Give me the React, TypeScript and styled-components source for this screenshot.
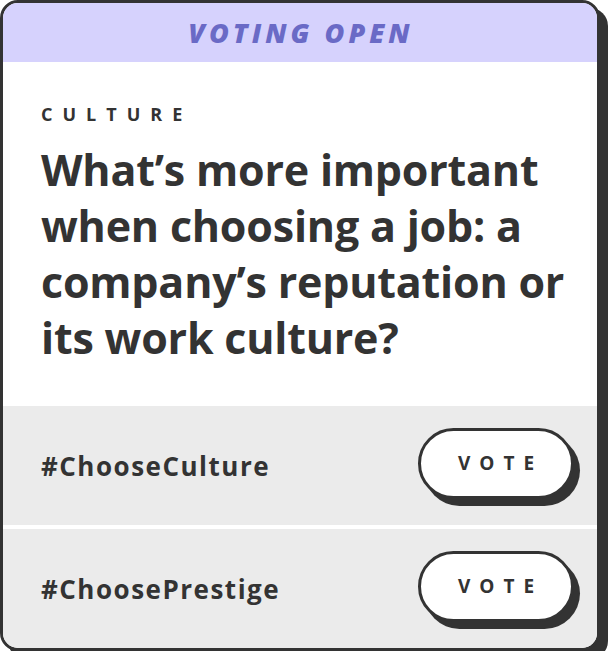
import React from 'react';
import styled, { createGlobalStyle } from 'styled-components';

const GlobalStyle = createGlobalStyle`
  html, body {
    margin: 0;
    padding: 0;
    background: #ffffff;
  }
  body {
    font-family: "Open Sans", Lato, sans-serif;
    color: #333333;
  }
`;

const options: string[] = ['#ChooseCulture', '#ChoosePrestige'];

export default function App() {
  return (
    <>
      <GlobalStyle />
      <Card>
        <Banner>VOTING OPEN</Banner>
        <Body>
          <Category>CULTURE</Category>
          <Question>
            What’s more important when choosing a job: a company’s reputation or its work culture?
          </Question>
        </Body>
        <Options>
          {options.map(x => (
            <OptionRow key={x}>
              <Tag>{x}</Tag>
              <VoteButton>VOTE</VoteButton>
            </OptionRow>
          ))}
        </Options>
      </Card>
    </>
  );
}

const Card = styled.div`
  width: 600px;
  height: 651px;
  box-sizing: border-box;
  border: 3px solid #333333;
  border-radius: 18px;
  box-shadow: 8px 8px 0 #333333;
  overflow: hidden;
  display: flex;
  flex-direction: column;
  background: #ffffff;
`;

const Banner = styled.div`
  height: 59px;
  flex-shrink: 0;
  display: flex;
  align-items: center;
  justify-content: center;
  background: #d6d2fd;
  color: #6a6ac6;
  font-size: 27px;
  font-weight: 800;
  font-style: italic;
  letter-spacing: 4px;
  padding-left: 2px;
`;

const Body = styled.div`
  height: 344px;
  flex-shrink: 0;
  box-sizing: border-box;
  padding: 40px 20px 0 38px;
`;

const Category = styled.div`
  font-size: 18px;
  font-weight: 700;
  letter-spacing: 10px;
  line-height: 24px;
`;

const Question = styled.h1`
  margin: 16px 0 0;
  font-size: 43px;
  font-weight: 700;
  line-height: 56px;
  letter-spacing: -0.2px;
  color: #333333;
`;

const Options = styled.div`
  flex: 1;
  display: flex;
  flex-direction: column;
  gap: 4px;
`;

const OptionRow = styled.div`
  flex: 1;
  display: flex;
  align-items: center;
  justify-content: space-between;
  background: #ebebeb;
  padding: 0 23px 0 38px;
`;

const Tag = styled.div`
  font-size: 26px;
  font-weight: 700;
  letter-spacing: 1.5px;
`;

const VoteButton = styled.button`
  width: 156px;
  height: 71px;
  box-sizing: border-box;
  border: 3px solid #333333;
  border-radius: 36px;
  background: #ffffff;
  box-shadow: 6px 7px 0 #333333;
  color: #333333;
  font-family: "Open Sans", Lato, sans-serif;
  font-size: 19px;
  font-weight: 700;
  letter-spacing: 9px;
  padding: 0 0 0 9px;
  margin-top: -5px;
`;
